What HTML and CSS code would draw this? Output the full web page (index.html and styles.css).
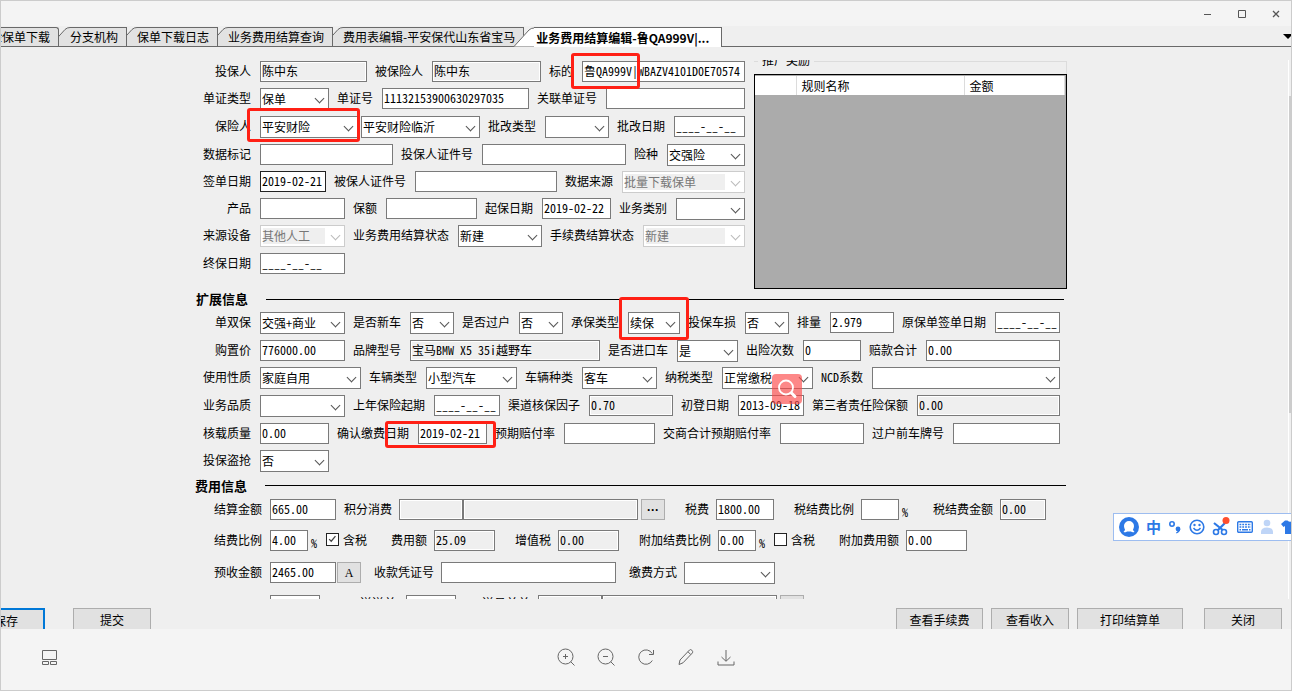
FILE: index.html
```html
<!DOCTYPE html>
<html lang="zh-CN">
<head>
<meta charset="utf-8">
<title>业务费用结算编辑</title>
<link rel="stylesheet" href="styles.css">
</head>
<body>
<div class="window">
  <header class="titlebar">
    <button type="button" aria-label="最小化"><svg width="10" height="10" viewBox="0 0 10 10"><path d="M1 5.500H8"/></svg></button>
    <button type="button" aria-label="最大化"><svg width="10" height="10" viewBox="0 0 10 10"><path d="M1.500 1.500H8.500V8.500H1.500Z"/></svg></button>
    <button type="button" aria-label="关闭"><svg width="10" height="10" viewBox="0 0 10 10"><path d="M2 2L8 8M8 2L2 8" stroke-width="1.300"/></svg></button>
  </header>

  <nav class="tabs">
    <button type="button" class="tab first">险保单下载</button>
    <button type="button" class="tab"><svg class="slant" viewBox="0 0 20 19"><path class="fill" d="M0 19L15 2Q17 0 20 0V19Z"/><path class="line" d="M0 19L15 2.500Q17 .5 20 .5"/></svg>分支机构</button>
    <button type="button" class="tab"><svg class="slant" viewBox="0 0 20 19"><path class="fill" d="M0 19L15 2Q17 0 20 0V19Z"/><path class="line" d="M0 19L15 2.500Q17 .5 20 .5"/></svg>保单下载日志</button>
    <button type="button" class="tab"><svg class="slant" viewBox="0 0 20 19"><path class="fill" d="M0 19L15 2Q17 0 20 0V19Z"/><path class="line" d="M0 19L15 2.500Q17 .5 20 .5"/></svg>业务费用结算查询</button>
    <button type="button" class="tab"><svg class="slant" viewBox="0 0 20 19"><path class="fill" d="M0 19L15 2Q17 0 20 0V19Z"/><path class="line" d="M0 19L15 2.500Q17 .5 20 .5"/></svg>费用表编辑-平安保代山东省宝马</button>
    <button type="button" class="tab active"><svg class="slant" viewBox="0 0 20 19"><path class="fill" d="M0 19L15 2Q17 0 20 0V19Z"/><path class="line" d="M0 19L15 2.500Q17 .5 20 .5"/></svg>业务费用结算编辑-鲁QA999V|...</button>
    <span class="tab-more"></span>
  </nav>

  <main class="panel">
    <form class="sheet">
      <div class="top">
        <div class="rows basic">
          <div class="row">
            <label class="f"><span>投保人</span><input class="w107" value="陈中东" readonly></label>
            <label class="f"><span>被保险人</span><input class="w109" value="陈中东" readonly></label>
            <label class="f grow"><span>标的</span><input value="鲁QA999V|WBAZV4101D0E70574"><i class="ring ring-plate"></i></label>
          </div>
          <div class="row">
            <label class="f"><span>单证类型</span><b class="sel w69"><select><option>保单</option></select></b></label>
            <label class="f"><span>单证号</span><input class="w147" value="11132153900630297035"></label>
            <label class="f grow"><span>关联单证号</span><input></label>
          </div>
          <div class="row">
            <label class="f"><span>保险人</span><b class="sel w98"><select><option>平安财险</option></select></b><i class="ring ring-insurer"></i></label>
            <b class="sel w119 branch"><select aria-label="分公司"><option>平安财险临沂</option></select></b>
            <label class="f"><span>批改类型</span><b class="sel w64"><select><option></option></select></b></label>
            <label class="f grow"><span>批改日期</span><input value="____-__-__"></label>
          </div>
          <div class="row">
            <label class="f"><span>数据标记</span><input class="w133"></label>
            <label class="f"><span>投保人证件号</span><input class="w144"></label>
            <label class="f grow"><span>险种</span><b class="sel"><select><option>交强险</option></select></b></label>
          </div>
          <div class="row">
            <label class="f"><span>签单日期</span><input class="w66 dark" value="2019-02-21"></label>
            <label class="f"><span>被保人证件号</span><input class="w142"></label>
            <label class="f grow"><span>数据来源</span><b class="sel off"><select disabled><option>批量下载保单</option></select></b></label>
          </div>
          <div class="row">
            <label class="f"><span>产品</span><input class="w85"></label>
            <label class="f"><span>保额</span><input class="w91"></label>
            <label class="f"><span>起保日期</span><input class="w69" value="2019-02-22"></label>
            <label class="f grow"><span>业务类别</span><b class="sel"><select><option></option></select></b></label>
          </div>
          <div class="row">
            <label class="f"><span>来源设备</span><b class="sel off w85"><select disabled><option>其他人工</option></select></b></label>
            <label class="f"><span>业务费用结算状态</span><b class="sel w84"><select><option>新建</option></select></b></label>
            <label class="f grow"><span>手续费结算状态</span><b class="sel off"><select disabled><option>新建</option></select></b></label>
          </div>
          <div class="row">
            <label class="f"><span>终保日期</span><input class="w85" value="____-__-__"></label>
          </div>
        </div>
        <section class="rewards">
          <h2>推广奖励</h2>
          <div class="grid">
            <table>
              <thead><tr><th class="c-mark"></th><th class="c-name">规则名称</th><th>金额</th></tr></thead>
            </table>
          </div>
        </section>
      </div>

      <h3 class="head">扩展信息</h3>
      <div class="rows extra">
        <div class="row">
          <label class="f"><span>单双保</span><b class="sel w85"><select><option>交强+商业</option></select></b></label>
          <label class="f"><span>是否新车</span><b class="sel w44"><select><option>否</option></select></b></label>
          <label class="f"><span>是否过户</span><b class="sel w44"><select><option>否</option></select></b></label>
          <label class="f"><span>承保类型</span><b class="sel w52"><select><option>续保</option></select></b><i class="ring ring-renew"></i></label>
          <label class="f"><span>投保车损</span><b class="sel w44"><select><option>否</option></select></b></label>
          <label class="f"><span>排量</span><input class="w64" value="2.979"></label>
          <label class="f grow"><span>原保单签单日期</span><input value="____-__-__"></label>
        </div>
        <div class="row">
          <label class="f"><span>购置价</span><input class="w85" value="776000.00"></label>
          <label class="f"><span>品牌型号</span><input class="w190" value="宝马BMW X5 35i越野车" readonly></label>
          <label class="f"><span>是否进口车</span><b class="sel w61"><select><option>是</option></select></b></label>
          <label class="f"><span>出险次数</span><input class="w58" value="0"></label>
          <label class="f grow"><span>赔款合计</span><input value="0.00"></label>
        </div>
        <div class="row">
          <label class="f"><span>使用性质</span><b class="sel w101"><select><option>家庭自用</option></select></b></label>
          <label class="f"><span>车辆类型</span><b class="sel w91"><select><option>小型汽车</option></select></b></label>
          <label class="f"><span>车辆种类</span><b class="sel w75"><select><option>客车</option></select></b></label>
          <label class="f"><span>纳税类型</span><b class="sel w91"><select><option>正常缴税</option></select></b></label>
          <label class="f grow"><span>NCD系数</span><b class="sel"><select><option></option></select></b></label>
        </div>
        <div class="row">
          <label class="f"><span>业务品质</span><b class="sel w85"><select><option></option></select></b></label>
          <label class="f"><span>上年保险起期</span><input class="w66" value="____-__-__"></label>
          <label class="f"><span>渠道核保因子</span><input class="w84" value="0.70" readonly></label>
          <label class="f"><span>初登日期</span><input class="w66" value="2013-09-18"></label>
          <label class="f grow"><span>第三者责任险保额</span><input value="0.00" readonly></label>
        </div>
        <div class="row">
          <label class="f"><span>核载质量</span><input class="w69" value="0.00"></label>
          <label class="f"><span>确认缴费日期</span><input class="w69" value="2019-02-21"><i class="ring ring-date"></i></label>
          <label class="f"><span>预期赔付率</span><input class="w91"></label>
          <label class="f"><span>交商合计预期赔付率</span><input class="w84"></label>
          <label class="f grow"><span>过户前车牌号</span><input></label>
        </div>
        <div class="row">
          <label class="f"><span>投保盗抢</span><b class="sel w69"><select><option>否</option></select></b></label>
        </div>
      </div>

      <h3 class="head head-fee">费用信息</h3>
      <div class="rows fees">
        <div class="row">
          <label class="f"><span>结算金额</span><input class="w66" value="665.00"></label>
          <label class="f"><span>积分消费</span><input class="w64" readonly></label>
          <input class="w175" aria-label="积分说明" readonly>
          <button type="button" class="mini more">···</button>
          <label class="f far"><span>税费</span><input class="w58" value="1800.00"></label>
          <label class="f far"><span>税结费比例</span><input class="w38"></label><span class="pct">%</span>
          <label class="f farther"><span>税结费金额</span><input class="w46" value="0.00" readonly></label>
        </div>
        <div class="row">
          <label class="f"><span>结费比例</span><input class="w38" value="4.00"></label><span class="pct">%</span>
          <label class="check"><input type="checkbox" checked><svg width="13" height="13" viewBox="0 0 13 13"><path d="M2.500 6L5 8.500L10 2.500"/></svg>含税</label>
          <label class="f farther"><span>费用额</span><input class="w61" value="25.09" readonly></label>
          <label class="f far"><span>增值税</span><input class="w61" value="0.00" readonly></label>
          <label class="f far"><span>附加结费比例</span><input class="w38" value="0.00"></label><span class="pct">%</span>
          <label class="check"><input type="checkbox"><svg width="13" height="13" viewBox="0 0 13 13"></svg>含税</label>
          <label class="f farther"><span>附加费用额</span><input class="w61" value="0.00"></label>
        </div>
        <div class="row">
          <label class="f"><span>预收金额</span><input class="w66" value="2465.00"></label>
          <button type="button" class="mini letter">A</button>
          <label class="f near"><span>收款凭证号</span><input class="w175"></label>
          <label class="f near"><span>缴费方式</span><b class="sel w91"><select><option></option></select></b></label>
        </div>
        <div class="row">
          <label class="f"><span></span><input class="w50"></label>
          <label class="f farthest"><span>送送单</span><input class="w50"></label>
          <label class="f farthest last"><span>送员单单</span><input class="w64" readonly></label>
          <input class="w175" aria-label="名称" readonly>
          <button type="button" class="mini more">···</button>
        </div>
      </div>
    </form>
    <div class="scroll"><div class="thumb"></div></div>
  </main>

  <div class="actions">
    <button type="button" class="save">保存</button>
    <button type="button">提交</button>
    <div class="right">
      <button type="button" class="w87">查看手续费</button>
      <button type="button">查看收入</button>
      <button type="button" class="w106">打印结算单</button>
      <button type="button" class="close">关闭</button>
    </div>
  </div>

  <footer class="viewer">
    <button type="button" class="layout" aria-label="缩略图"><svg width="18" height="18" viewBox="0 0 18 18"><path d="M1.500 1.500H15.500V10.500H1.500ZM1.500 12.500H7.500V15.500H1.500ZM9.500 12.500H15.500V15.500H9.500Z"/></svg></button>
    <button type="button" aria-label="放大"><svg width="18" height="18" viewBox="0 0 18 18"><circle cx="8.500" cy="8.500" r="7.500"/><path d="M13.800 13.800L17.500 17.500M6 8.500H11M8.500 6V11"/></svg></button>
    <button type="button" aria-label="缩小"><svg width="18" height="18" viewBox="0 0 18 18"><circle cx="8.500" cy="8.500" r="7.500"/><path d="M13.800 13.800L17.500 17.500M6 8.500H11"/></svg></button>
    <button type="button" aria-label="旋转"><svg width="18" height="18" viewBox="0 0 18 18"><path d="M15.300 12.500A7.200 7.200 0 1 1 15.200 5.500M16.500 2V6.500H12"/></svg></button>
    <button type="button" aria-label="编辑"><svg width="18" height="18" viewBox="0 0 18 18"><path d="M2 16.500L3 12L12.500 2Q13.500 1 14.800 2.200T15.500 4.800L6 14.800ZM11 3.800L13.700 6.500"/></svg></button>
    <button type="button" aria-label="下载"><svg width="18" height="18" viewBox="0 0 18 18"><path d="M9 2V13M4.500 9L9 13.300L13.500 9M1 13.500V17H17V13.500"/></svg></button>
  </footer>

  <button type="button" class="lookup" aria-label="搜图"><svg width="30" height="30" viewBox="0 0 30 30"><circle cx="14" cy="13.500" r="7"/><path d="M19.500 19L23 22.500" stroke-width="3"/></svg></button>

  <div class="ime">
    <svg width="20" height="20" viewBox="0 0 20 20"><circle cx="10" cy="10" r="10" fill="#2d79e6"/><path d="M10 4a5 5 0 0 1 5 5c0 2-1 3-1 4l1.500 2c-1.500.6-3 .2-3.500-.5h-4c-.5.700-2 1.100-3.500.5L6 13c0-1-1-2-1-4a5 5 0 0 1 5-5Z" fill="#fff"/></svg>
    <span class="zh">中</span>
    <svg width="14" height="16" viewBox="0 0 14 16"><circle cx="4" cy="5" r="2.200" fill="none" stroke="#2d79e6" stroke-width="1.600"/><circle cx="10" cy="10" r="2.400" fill="#2d79e6"/><path d="M12.300 10Q12 13 8.500 14.500L8 13.500Q10 12.500 10 11Z" fill="#2d79e6"/></svg>
    <svg width="16" height="16" viewBox="0 0 16 16"><circle cx="8" cy="8" r="6.800" fill="none" stroke="#2d79e6" stroke-width="1.600"/><circle cx="5.500" cy="6" r="1.200" fill="#2d79e6"/><circle cx="10.500" cy="6" r="1.200" fill="#2d79e6"/><path d="M4.500 9Q8 13.500 11.500 9" fill="none" stroke="#2d79e6" stroke-width="1.400"/></svg>
    <svg width="18" height="20" viewBox="0 0 18 20"><path d="M2 6L12 14M13 6L5 14" stroke="#2d79e6" stroke-width="2.200"/><circle cx="4" cy="15" r="2.500" fill="#fff" stroke="#2d79e6" stroke-width="1.600"/><circle cx="12" cy="15" r="2.500" fill="#fff" stroke="#2d79e6" stroke-width="1.600"/><circle cx="14" cy="3.500" r="3.500" fill="#ff4f2e"/></svg>
    <svg width="16" height="12" viewBox="0 0 16 12"><rect x=".7" y=".7" width="14.600" height="10.600" rx="1" fill="#fff" stroke="#2d79e6" stroke-width="1.400"/><path d="M2.500 3.500H14M2.500 6H14" stroke="#2d79e6" stroke-width="1.400" stroke-dasharray="1.800 1"/><path d="M2.500 8.700H4M5 8.700H11M12 8.700H13.500" stroke="#2d79e6" stroke-width="1.400"/></svg>
    <svg width="14" height="16" viewBox="0 0 14 16"><circle cx="7" cy="4" r="3.300" fill="#bfd5f7"/><path d="M1 15V13Q1 8.500 7 8.500T13 13V15Z" fill="#bfd5f7"/></svg>
    <svg width="18" height="14" viewBox="0 0 18 14"><path d="M4 0.500H6.500Q9 3 11.500 .5H14L18 4L15.500 7L14 6V14H4V6L2.500 7L0 4Z" fill="#2d79e6"/></svg>
  </div>
</div>
</body>
</html>
```
FILE: styles.css
```css
* { box-sizing: border-box; }
body {
  margin: 0;
  background: #efefef;
  color: #000;
  font: 12px/20px "Noto Sans Mono CJK SC", "Noto Sans CJK SC", sans-serif;
}
button, input, select { font: inherit; color: inherit; margin: 0; padding: 0; border-radius: 0; }
button { cursor: pointer; }
.window {
  position: relative;
  display: flex;
  flex-direction: column;
  min-width: 1100px;
  height: 100vh;
  border: 1px solid #ccc;
  overflow: hidden;
}

.titlebar {
  display: flex;
  justify-content: flex-end;
  align-items: center;
  gap: 24px;
  height: 25px;
  flex: none;
  padding-right: 10px;
  background: #f4f4f4;
}
.titlebar button { display: flex; border: 0; background: none; }
.titlebar svg { fill: none; stroke: #555; }

.tabs {
  display: flex;
  align-items: flex-end;
  height: 21px;
  flex: none;
  border-bottom: 1px solid #696969;
  position: relative;
}
.tab {
  position: relative;
  height: 19px;
  margin-left: -9px;
  padding: 1px 8px 0 20px;
  border: 0;
  border-right: 1px solid #696969;
  background: linear-gradient(#696969, #696969) 20px 0 / 100% 1px no-repeat, linear-gradient(#e2e2e2, #e2e2e2) 20px 0 no-repeat;
  line-height: 18px;
  font-family: "Noto Sans CJK SC", sans-serif;
  white-space: nowrap;
}
.tab.first { z-index: 6; margin-left: -11px; padding: 0 8px 0 0; border-top: 1px solid #696969; border-top-right-radius: 3px; background: #e2e2e2; }
.tab:nth-child(2) { z-index: 5; }
.tab:nth-child(3) { z-index: 4; }
.tab:nth-child(4) { z-index: 3; }
.tab:nth-child(5) { z-index: 2; }
.tab:nth-child(n+3) { margin-left: -10px; }
.tab.active {
  z-index: 9;
  height: 20px;
  margin-bottom: -1px;
  padding: 1px 12px 0 22px;
  background: linear-gradient(#696969, #696969) 20px 0 / 100% 1px no-repeat, linear-gradient(#fff, #fff) 20px 0 no-repeat;
  font-weight: 700;
}
.slant { position: absolute; left: 0; top: 0; width: 20px; height: 100%; }
.slant .fill { fill: #e2e2e2; }
.active .fill { fill: #fff; }
.slant .line { fill: none; stroke: #696969; }
.tab-more { margin: 0 -2px 7px auto; border: 5px solid transparent; border-top-color: #000; border-bottom: 0; }

.panel { display: flex; flex: 1; min-height: 0; padding-top: 13px; overflow: hidden; }
.sheet { flex: 1; min-width: 0; padding: 1px 221px 0 194px; }
.scroll { width: 3px; border-left: 1px solid #fff; padding-top: 36px; }
.thumb { height: 317px; background: #cdcdcd; }

.top { display: grid; grid-template-columns: minmax(0, 1fr) 313px; gap: 9px; }
.rows { display: grid; grid-template-columns: minmax(0, 1fr); align-items: start; }
.basic { grid-template-rows: 27px 28px 28px 27px 27px 27px 28px 33px; }
.extra { grid-template-rows: 28px 27px 28px 28px 27px 22px; padding-right: 7px; }
.fees { grid-template-rows: 31px 32px 33px 24px; }
.row { display: flex; align-items: flex-start; min-width: 0; white-space: nowrap; }

.f { position: relative; display: flex; flex: none; }
.f.grow { flex: 1; min-width: 0; }
.f.grow input, .f.grow .sel { flex: 1; width: 0; min-width: 0; }
.f > span { padding: 0 9px 0 8px; line-height: 20px; }
.f:first-child > span { width: 65px; padding-left: 0; text-align: right; }
.row input:not([type]) {
  height: 21px;
  padding: 0 1px 3px;
  border: 1px solid #7a7a7a;
  background: #fff;
  outline: 0;
}
.row input[readonly]:not([type]) { background: #efefef; box-shadow: inset 0 0 0 1px #fff; }
.row input.dark:not([type]) { border-color: #222; }

.sel { position: relative; display: flex; height: 22px; font-weight: 400; }
.sel select {
  appearance: none;
  width: 100%;
  padding: 0 16px 4px 1px;
  border: 1px solid #7a7a7a;
  background: #fff;
}
.sel::after {
  content: "";
  position: absolute;
  right: 6px;
  top: 7px;
  width: 6px;
  height: 6px;
  border: solid #555;
  border-width: 0 1px 1px 0;
  transform: rotate(45deg);
}
.sel.off select {
  border-color: #ccc;
  color: #777;
  opacity: 1;
  background: linear-gradient(#efefef, #efefef) 2px 2px / calc(100% - 21px) 16px no-repeat #fff;
}
.sel.off::after { border-color: #bbb; }
.branch { margin-left: 3px; }

.w38 { width: 38px; }
.w44 { width: 44px; }
.w46 { width: 46px; }
.w50 { width: 50px; }
.w52 { width: 52px; }
.w58 { width: 58px; }
.w61 { width: 61px; }
.w64 { width: 64px; }
.w66 { width: 66px; }
.w69 { width: 69px; }
.w75 { width: 75px; }
.w84 { width: 84px; }
.w85 { width: 85px; }
.w91 { width: 91px; }
.w98 { width: 98px; }
.w101 { width: 101px; }
.w107 { width: 107px; }
.w109 { width: 109px; }
.w119 { width: 119px; }
.w133 { width: 133px; }
.w142 { width: 142px; }
.w144 { width: 144px; }
.w147 { width: 147px; }
.w175 { width: 175px; }
.w190 { width: 190px; }

.ring { position: absolute; z-index: 3; border: 3px solid #ff2015; border-radius: 3px; pointer-events: none; }
.ring-plate { left: 30px; top: -8px; width: 69px; height: 36px; }
.ring-insurer { left: 52px; top: -8px; width: 113px; height: 34px; }
.ring-renew { right: -9px; top: -15px; width: 70px; height: 43px; }
.ring-date { right: -9px; top: -2px; width: 111px; height: 27px; }

.rewards { height: 228px; margin-bottom: -4px; border: 1px solid #dcdcdc; border-width: 1px 1px 0 0; }
.rewards h2 { display: flex; align-items: flex-end; width: 56px; height: 8px; margin: -2px 0 0 4px; padding: 0 4px; background: #efefef; font-size: 12px; font-weight: 400; line-height: 16px; overflow: hidden; }
.grid { height: 215px; margin: 6px -1px 0 0; padding: 1px 1px 0 0; border: 1px solid #000; background: #ababab; }
.grid table { width: 100%; border-collapse: collapse; background: #fff; }
.grid th { height: 19px; padding: 0 5px; border-right: 1px solid #dcdcdc; font-weight: 400; text-align: left; line-height: 18px; }
.grid .c-mark { width: 41px; }
.grid .c-name { width: 168px; }

.head { display: flex; align-items: center; gap: 18px; height: 26px; margin: 0; padding: 0 3px 0 1px; font-size: 13px; line-height: 26px; }
.head::after { content: ""; flex: 1; height: 1px; background: #000; }
.head-fee { height: 27px; padding: 0 1px 0 0; }

.fees .f > span { padding-right: 7px; }
.fees .f:first-child > span { width: 75px; padding-right: 8px; }
.fees .near > span { padding-left: 13px; }
.fees .far > span { padding-left: 20px; }
.fees .farther > span { padding-left: 24px; }
.fees .farthest > span { padding: 0 10px 0 40px; line-height: 16px; }
.fees .last > span { padding: 0 8px 0 26px; }
.pct { width: 10px; padding: 3px 0 0 3px; }
.check { position: relative; display: flex; gap: 4px; margin-left: 8px; }
.check input { position: absolute; left: 0; top: 3px; width: 13px; height: 13px; opacity: 0; }
.check svg { margin-top: 3px; border: 1px solid #222; background: #fff; fill: none; stroke: #444; stroke-width: 1.500; }
.mini { width: 24px; height: 21px; border: 1px solid #adadad; background: #e1e1e1; line-height: 18px; }
.more { margin-left: 3px; font-family: "Liberation Sans", sans-serif; font-weight: 700; }
.letter { margin-left: 1px; font-family: "Liberation Serif", serif; }

.actions { display: flex; gap: 28px; height: 30px; flex: none; padding: 9px 9px 0 0; overflow: hidden; }
.actions button { width: 78px; height: 24px; border: 1px solid #adadad; background: #e1e1e1; line-height: 22px; }
.actions .save { margin-left: -34px; border: 2px solid #0078d7; }
.actions .right { display: flex; gap: 8px; margin-left: auto; }
.actions .w87 { width: 87px; }
.actions .w106 { width: 106px; }
.actions .close { margin-left: 13px; }

.viewer { position: relative; display: flex; justify-content: center; align-items: center; gap: 22px; height: 61px; flex: none; padding-bottom: 5px; background: #f4f4f4; }
.viewer button { display: flex; border: 0; background: none; }
.viewer .layout { position: absolute; left: 40px; top: 20px; }
.viewer svg { fill: none; stroke: #666; }

.lookup { position: absolute; left: 771px; top: 373px; z-index: 5; display: flex; border: 0; border-radius: 4px; background: rgba(252, 72, 72, .65); }
.lookup svg { fill: none; stroke: #fff; stroke-width: 1.800; stroke-linecap: round; }

.ime { position: absolute; right: -14px; top: 512px; z-index: 5; display: flex; align-items: center; gap: 7px; height: 28px; padding: 0 5px; border: 1px solid #9dbdf0; background: #fff; }
.ime .zh { color: #2d79e6; font: 700 15px/24px "Noto Sans CJK SC", sans-serif; }
```
